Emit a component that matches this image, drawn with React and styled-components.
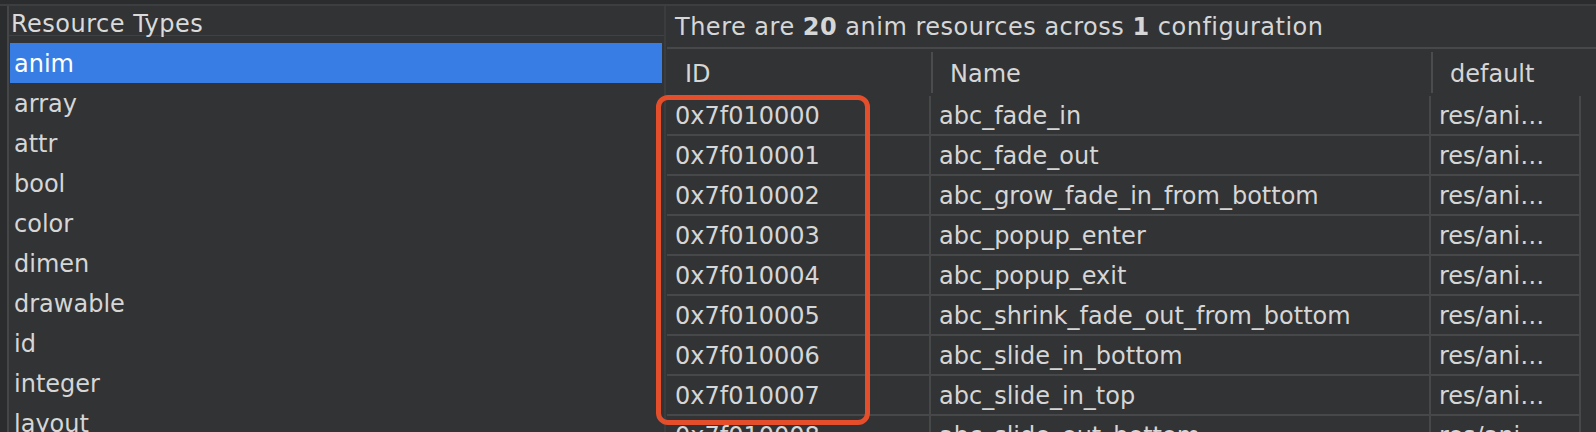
import React from "react";
import styled, { createGlobalStyle } from "styled-components";

const Global = createGlobalStyle`
  html, body { margin: 0; padding: 0; background: #2b2c2d; }
  body { font-family: "DejaVu Sans", "Liberation Sans", sans-serif; }
  * { box-sizing: border-box; }
`;

const Frame = styled.div`
  width: 1596px;
  height: 432px;
  overflow: hidden;
  display: flex;
  flex-direction: column;
  background: #323334;
  color: #d6d6d6;
  font-size: 24px;
`;

const TopStrip = styled.div`
  flex: none;
  height: 6px;
  background: #2b2c2d;
  border-bottom: 2px solid #3c3e40;
`;

const Main = styled.div`
  flex: 1;
  min-height: 0;
  display: flex;
`;

const Gutter = styled.div`
  flex: none;
  width: 9px;
  background: #2b2c2d;
  border-right: 2px solid #444648;
`;

const LeftPanel = styled.div`
  flex: none;
  width: 655px;
  display: flex;
  flex-direction: column;
`;

const PanelTitle = styled.div`
  height: 30px;
  padding: 6px 0 0 2px;
  line-height: 25px;
  letter-spacing: 0.5px;
  color: #dadada;
  border-bottom: 1px solid #3f4143;
  white-space: nowrap;
`;

const TypeList = styled.ul`
  list-style: none;
  margin: 0;
  padding: 7px 2px 0 1px;
`;

const TypeItem = styled.li`
  height: 40px;
  padding: 2px 0 0 4px;
  line-height: 38px;
  background: ${(p) => (p.$selected ? "#387de3" : "transparent")};
  color: ${(p) => (p.$selected ? "#ffffff" : "#d6d6d6")};
`;

const Divider = styled.div`
  flex: none;
  width: 2px;
  background: #3a3c3e;
`;

const RightPanel = styled.div`
  flex: 1;
  min-width: 0;
  display: flex;
  flex-direction: column;
`;

const Summary = styled.div`
  flex: none;
  height: 41px;
  padding: 2px 0 0 9px;
  line-height: 39px;
  letter-spacing: 0.5px;
  white-space: nowrap;
  b { font-weight: bold; }
`;

const Table = styled.div`
  position: relative;
  margin-left: 1px;
  border-top: 2px solid #46484a;
`;

const COLS = "264px 500px 150px";

const HeaderRow = styled.div`
  display: grid;
  grid-template-columns: ${COLS};
  height: 47px;
  padding: 3px 0;
`;

const HeaderCell = styled.div`
  padding: 3px 0 0 ${(p) => (p.$first ? 18 : 17)}px;
  line-height: 38px;
  border-left: ${(p) => (p.$first ? "none" : "2px solid #4a4c4e")};
  white-space: nowrap;
`;

const Row = styled.div`
  display: grid;
  grid-template-columns: ${COLS};
  width: 914px;
  height: 40px;
  border-bottom: 2px solid #46484a;
`;

const Cell = styled.div`
  padding: 3px 0 0 8px;
  line-height: 35px;
  border-right: 2px solid #46484a;
  white-space: nowrap;
  overflow: hidden;
`;

const Highlight = styled.div`
  position: absolute;
  left: -11px;
  top: 46px;
  width: 214px;
  height: 330px;
  border: 5px solid #e54e2b;
  border-radius: 12px;
  pointer-events: none;
`;

const types = [
  "anim", "array", "attr", "bool", "color", "dimen", "drawable", "id",
  "integer", "layout", "menu", "mipmap", "string", "style", "styleable",
];

const names = [
  "abc_fade_in",
  "abc_fade_out",
  "abc_grow_fade_in_from_bottom",
  "abc_popup_enter",
  "abc_popup_exit",
  "abc_shrink_fade_out_from_bottom",
  "abc_slide_in_bottom",
  "abc_slide_in_top",
  "abc_slide_out_bottom",
  "abc_slide_out_top",
  "abc_tooltip_enter",
  "abc_tooltip_exit",
];

export default function App() {
  return (
    <>
      <Global />
      <Frame>
        <TopStrip />
        <Main>
          <Gutter />
          <LeftPanel>
            <PanelTitle>Resource Types</PanelTitle>
            <TypeList>
              {types.map((t, i) => (
                <TypeItem key={t} $selected={i === 0}>
                  {t}
                </TypeItem>
              ))}
            </TypeList>
          </LeftPanel>
          <Divider />
          <RightPanel>
            <Summary>
              There are <b>20</b> anim resources across <b>1</b> configuration
            </Summary>
            <Table>
              <HeaderRow>
                <HeaderCell $first>ID</HeaderCell>
                <HeaderCell>Name</HeaderCell>
                <HeaderCell>default</HeaderCell>
              </HeaderRow>
              {names.map((n, i) => (
                <Row key={n}>
                  <Cell>{"0x7f01" + i.toString(16).padStart(4, "0")}</Cell>
                  <Cell>{n}</Cell>
                  <Cell>res/ani…</Cell>
                </Row>
              ))}
              <Highlight />
            </Table>
          </RightPanel>
        </Main>
      </Frame>
    </>
  );
}
